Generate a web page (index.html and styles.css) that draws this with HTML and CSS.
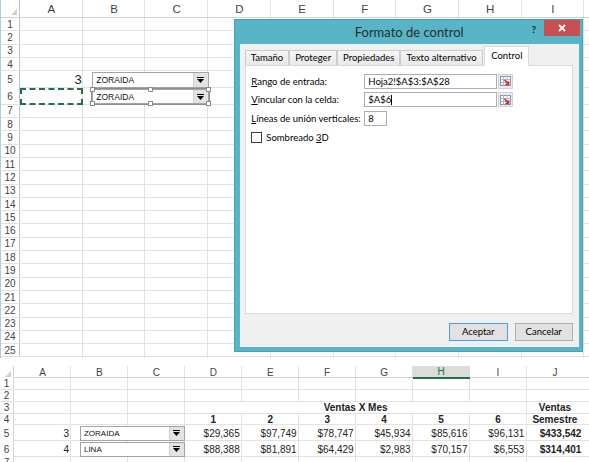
FILE: index.html
```html
<!DOCTYPE html>
<html lang="es">
<head>
    <meta charset="UTF-8">
    <title>Formato de control</title>
    <link rel="stylesheet" href="styles.css">
</head>
<body>

<!-- hoja de arriba: combos vinculados -->
<div class="sheet sheet-top">
    <div class="row head">
        <div class="rh corner"></div>
        <div class="ch">A</div><div class="ch">B</div><div class="ch">C</div><div class="ch">D</div><div class="ch">E</div>
        <div class="ch">F</div><div class="ch">G</div><div class="ch">H</div><div class="ch">I</div>
    </div>
    <div class="row"><div class="rh">1</div></div>
    <div class="row"><div class="rh">2</div></div>
    <div class="row"><div class="rh">3</div></div>
    <div class="row"><div class="rh">4</div></div>
    <div class="row tall">
        <div class="rh">5</div>
        <div class="cell num big">3</div>
        <div class="combo">
            <span class="combo-text">ZORAIDA</span>
            <span class="combo-btn"><svg class="arrow" viewBox="0 0 7 6"><rect width="7" height="1"/><polygon points="0,2 7,2 3.5,6"/></svg></span>
        </div>
    </div>
    <div class="row tall">
        <div class="rh">6</div>
        <div class="cell marquee"></div>
        <div class="combo selected">
            <span class="combo-text">ZORAIDA</span>
            <span class="combo-btn"><svg class="arrow" viewBox="0 0 7 6"><rect width="7" height="1"/><polygon points="0,2 7,2 3.5,6"/></svg></span>
            <i class="handle tl"></i><i class="handle tm"></i><i class="handle tr"></i>
            <i class="handle bl"></i><i class="handle bm"></i><i class="handle br"></i>
        </div>
    </div>
    <div class="row"><div class="rh">7</div></div>
    <div class="row"><div class="rh">8</div></div>
    <div class="row"><div class="rh">9</div></div>
    <div class="row"><div class="rh">10</div></div>
    <div class="row"><div class="rh">11</div></div>
    <div class="row"><div class="rh">12</div></div>
    <div class="row"><div class="rh">13</div></div>
    <div class="row"><div class="rh">14</div></div>
    <div class="row"><div class="rh">15</div></div>
    <div class="row"><div class="rh">16</div></div>
    <div class="row"><div class="rh">17</div></div>
    <div class="row"><div class="rh">18</div></div>
    <div class="row"><div class="rh">19</div></div>
    <div class="row"><div class="rh">20</div></div>
    <div class="row"><div class="rh">21</div></div>
    <div class="row"><div class="rh">22</div></div>
    <div class="row"><div class="rh">23</div></div>
    <div class="row"><div class="rh">24</div></div>
    <div class="row"><div class="rh">25</div></div>
</div>

<!-- hoja de abajo: ventas por mes -->
<div class="sheet sheet-bottom">
    <div class="row head">
        <div class="rh corner"></div>
        <div class="ch">A</div><div class="ch">B</div><div class="ch">C</div><div class="ch">D</div><div class="ch">E</div>
        <div class="ch">F</div><div class="ch">G</div><div class="ch active">H</div><div class="ch">I</div><div class="ch">J</div>
    </div>
    <div class="row"><div class="rh">1</div></div>
    <div class="row"><div class="rh">2</div></div>
    <div class="row">
        <div class="rh">3</div>
        <div class="cell b center merged">Ventas X Mes</div>
        <div class="cell b center">Ventas</div>
    </div>
    <div class="row">
        <div class="rh">4</div>
        <div class="cell b center col-d">1</div>
        <div class="cell b center">2</div>
        <div class="cell b center">3</div>
        <div class="cell b center">4</div>
        <div class="cell b center">5</div>
        <div class="cell b center">6</div>
        <div class="cell b center">Semestre</div>
    </div>
    <div class="row tall">
        <div class="rh">5</div>
        <div class="cell num">3</div>
        <div class="combo">
            <span class="combo-text">ZORAIDA</span>
            <span class="combo-btn"><svg class="arrow" viewBox="0 0 7 6"><rect width="7" height="1"/><polygon points="0,2 7,2 3.5,6"/></svg></span>
        </div>
        <div class="cell num">$29,365</div>
        <div class="cell num">$97,749</div>
        <div class="cell num">$78,747</div>
        <div class="cell num">$45,934</div>
        <div class="cell num">$85,616</div>
        <div class="cell num">$96,131</div>
        <div class="cell num b">$433,542</div>
    </div>
    <div class="row tall">
        <div class="rh">6</div>
        <div class="cell num">4</div>
        <div class="combo">
            <span class="combo-text">LINA</span>
            <span class="combo-btn"><svg class="arrow" viewBox="0 0 7 6"><rect width="7" height="1"/><polygon points="0,2 7,2 3.5,6"/></svg></span>
        </div>
        <div class="cell num">$88,388</div>
        <div class="cell num">$81,891</div>
        <div class="cell num">$64,429</div>
        <div class="cell num">$2,983</div>
        <div class="cell num">$70,157</div>
        <div class="cell num">$6,553</div>
        <div class="cell num b">$314,401</div>
    </div>
    <div class="row"><div class="rh">7</div></div>
</div>

<!-- cuadro de dialogo encima de la hoja -->
<div class="dialog">
    <div class="titlebar">
        <span class="title">Formato de control</span>
        <span class="help">?</span>
        <span class="close"><svg width="8" height="8" viewBox="0 0 8 8"><path d="M1 1L7 7M7 1L1 7" stroke="#fff" stroke-width="1.8"/></svg></span>
    </div>
    <div class="dlg-body">
        <div class="tabs">
            <div class="tab">Tamaño</div>
            <div class="tab">Proteger</div>
            <div class="tab">Propiedades</div>
            <div class="tab">Texto alternativo</div>
            <div class="tab active">Control</div>
        </div>
        <div class="panel">
            <div class="fields">
                <span><u>R</u>ango de entrada:</span>
                <div class="refedit">
                    <span class="input">Hoja2!$A$3:$A$28</span>
                    <span class="refbtn"><svg width="11" height="10" viewBox="0 0 11 10"><rect x="0.5" y="0.5" width="10" height="9" fill="#fff" stroke="#7d97b4"/><path d="M0.5 3.5h10M0.5 6.5h10M3.5 0.5v9M7 0.5v9" stroke="#a9bdd2"/><path d="M4.5 4L8.5 8M8.5 5.2V8.5H5.2" stroke="#d62a2a" stroke-width="1.6" fill="none"/></svg></span>
                </div>
                <span><u>V</u>incular con la celda:</span>
                <div class="refedit">
                    <span class="input">$A$6<span class="caret"></span></span>
                    <span class="refbtn"><svg width="11" height="10" viewBox="0 0 11 10"><rect x="0.5" y="0.5" width="10" height="9" fill="#fff" stroke="#7d97b4"/><path d="M0.5 3.5h10M0.5 6.5h10M3.5 0.5v9M7 0.5v9" stroke="#a9bdd2"/><path d="M4.5 4L8.5 8M8.5 5.2V8.5H5.2" stroke="#d62a2a" stroke-width="1.6" fill="none"/></svg></span>
                </div>
                <span><u>L</u>íneas de unión verticales:</span>
                <span class="input short">8</span>
            </div>
            <div class="check"><span class="box"></span><span>Sombreado <u>3</u>D</span></div>
        </div>
        <div class="buttons">
            <button class="btn default">Aceptar</button>
            <button class="btn">Cancelar</button>
        </div>
    </div>
</div>

</body>
</html>
```

FILE: styles.css
```css
body {
    margin: 0;
    width: 589px;
    height: 462px;
    overflow: hidden;
    position: relative;
    background: #ffffff;
    font-family: "Liberation Sans", Arial, sans-serif;
    color: #222;
}

/* ---- hojas ---- */
.sheet {
    overflow: hidden;
}
.row {
    display: grid;
    box-sizing: border-box;
    border-bottom: 1px solid #e2e2e2;
}
.rh {
    box-sizing: border-box;
    background: #fff;
    border-right: 1px solid #c3c3c3;
    color: #444;
    display: flex;
    align-items: center;
    justify-content: center;
}
.ch {
    color: #444;
    display: flex;
    align-items: center;
    justify-content: center;
}
.corner {
    align-items: flex-end;
    justify-content: flex-end;
    padding: 0 2px 2px 0;
}
.corner::after {
    content: "";
    border-left: 6px solid transparent;
    border-bottom: 6px solid #cfcfcf;
}
.cell {
    display: flex;
    align-items: center;
    min-width: 0;
    white-space: nowrap;
}
.num {
    justify-content: flex-end;
    padding-right: 2px;
}
.center {
    justify-content: center;
}
.b {
    font-weight: bold;
}

.sheet-top {
    height: 358px;
    border-left: 1px solid #a9cfe0;
    background-image: repeating-linear-gradient(to right, transparent 0 61.7px, #e2e2e2 61.7px 62.7px);
    background-position: 19px 0;
}
.sheet-top .row {
    grid-template-columns: 19px repeat(10, 62.7px);
    height: 13.3px;
}
.sheet-top .row.head {
    height: 18px;
    border-bottom-color: #d2d2d2;
}
.sheet-top .row.tall {
    height: 16.8px;
}
.sheet-top .rh {
    font-size: 10px;
}
.sheet-top .ch {
    font-size: 11.5px;
}
.big {
    font-size: 13px;
    align-items: flex-end;
    padding: 0 1px 1px 0;
}
.marquee {
    box-sizing: border-box;
    border: 2px dashed #217346;
    margin-bottom: -1px;
}

.sheet-bottom {
    margin-top: 8px;
    font-size: 10px;
    background-image: repeating-linear-gradient(to right, transparent 0 55.95px, #e2e2e2 55.95px 56.95px);
    background-position: 14px 0;
}
.sheet-bottom .row {
    grid-template-columns: 14px repeat(10, 56.95px);
    height: 11.85px;
}
.sheet-bottom .row.head {
    height: 12px;
    border-bottom-color: #d2d2d2;
}
.sheet-bottom .row.tall {
    height: 16px;
}
.sheet-bottom .rh {
    border-right-color: #d6d6d6;
}
.ch.active {
    background: #dcdcdc;
    border-bottom: 2px solid #217346;
    color: #217346;
}
.merged {
    grid-column: 5 / 11;
    background: #fff;
}
.col-d {
    grid-column-start: 5;
}

/* ---- cuadros combinados ---- */
.combo {
    grid-column: span 2;
    position: relative;
    display: flex;
    box-sizing: border-box;
    height: 15.7px;
    margin: 0.8px -0.7px 0 9.6px;
    align-self: start;
    border: 1px solid #a3a3a3;
    background: #fff;
}
.sheet-bottom .combo {
    height: 15px;
    margin: 0.5px 0 0 9px;
}
.combo-text {
    flex: 1;
    display: flex;
    align-items: center;
    padding-left: 3px;
    font-size: 8.5px;
    color: #111;
}
.sheet-bottom .combo-text {
    font-size: 8px;
}
.combo-btn {
    width: 14px;
    background: #e3e3e3;
    border-left: 1px solid #d0d0d0;
    display: flex;
    align-items: center;
    justify-content: center;
}
.arrow {
    width: 7px;
    height: 6px;
}
.combo.selected {
    outline: 1px solid #8c8c8c;
}
.handle {
    position: absolute;
    width: 5px;
    height: 5px;
    box-sizing: border-box;
    background: #fff;
    border: 1px solid #8a8a8a;
}
.tl { top: -3px; left: -3px; }
.tm { top: -3px; left: calc(50% - 2.5px); }
.tr { top: -3px; right: -3px; }
.bl { bottom: -3px; left: -3px; }
.bm { bottom: -3px; left: calc(50% - 2.5px); }
.br { bottom: -3px; right: -3px; }

/* ---- dialogo ---- */
.dialog {
    position: absolute;
    left: 234px;
    top: 19px;
    width: 349px;
    height: 333px;
    box-sizing: border-box;
    display: flex;
    flex-direction: column;
    background: #58b5c7;
    border: 1px solid #45a2b5;
    font-family: Lato, "Liberation Sans", sans-serif;
    font-size: 9.5px;
    color: #000;
}
.titlebar {
    height: 24px;
    display: flex;
    align-items: flex-start;
}
.title {
    flex: 1;
    text-align: center;
    padding-left: 52px;
    font-size: 13px;
    line-height: 24px;
    color: #2b2b2b;
}
.help {
    font-weight: bold;
    font-size: 10px;
    margin: 3px 8px 0 0;
    color: #222;
}
.close {
    width: 36px;
    height: 16px;
    margin-right: 2px;
    background: #c75050;
    display: flex;
    align-items: center;
    justify-content: center;
}
.dlg-body {
    flex: 1;
    margin: 0 3px 4px 5px;
    padding: 1.7px 6.3px 6.3px 4.7px;
    background: #f0f0f0;
    display: flex;
    flex-direction: column;
}
.tabs {
    display: flex;
    align-items: flex-end;
    height: 19.3px;
    position: relative;
    z-index: 1;
}
.tab {
    height: 15px;
    box-sizing: border-box;
    padding: 0 5px;
    line-height: 14px;
    border: 1px solid #cbcbcb;
    border-bottom: none;
    background: linear-gradient(#f5f5f5, #e9e9e9);
}
.tab.active {
    height: 20.3px;
    margin: 0 0 -1px 1.6px;
    padding: 0 6px;
    line-height: 18px;
    background: #fff;
    border-color: #d9d9d9;
}
.panel {
    flex: 1;
    border: 1px solid #d9d9d9;
    background: #fff;
    padding: 8px 0 0 5.6px;
}
.fields {
    display: grid;
    grid-template-columns: 113px auto;
    justify-content: start;
    align-items: center;
    row-gap: 3.5px;
}
.refedit {
    display: flex;
}
.input {
    height: 15px;
    box-sizing: border-box;
    border: 1px solid #abadb3;
    background: #fff;
    padding: 0 3px;
    line-height: 13px;
    white-space: nowrap;
}
.refedit .input {
    width: 133px;
}
.input.short {
    width: 23px;
}
.caret {
    display: inline-block;
    width: 1px;
    height: 10px;
    background: #000;
    vertical-align: -2px;
}
.refbtn {
    width: 15px;
    height: 15px;
    box-sizing: border-box;
    margin-left: 0.7px;
    border: 1px solid #d3d3d3;
    background: #ececec;
    display: flex;
    align-items: center;
    justify-content: center;
}
.check {
    display: flex;
    align-items: center;
    gap: 4px;
    margin-top: 6px;
}
.box {
    width: 11px;
    height: 11px;
    box-sizing: border-box;
    border: 1px solid #3a3a3a;
    background: #fff;
}
.buttons {
    display: flex;
    justify-content: flex-end;
    gap: 7px;
    margin-top: 8.7px;
}
.btn {
    width: 58px;
    height: 18px;
    box-sizing: border-box;
    padding: 0;
    border: 1px solid #adadad;
    background: #e1e1e1;
    font: inherit;
    color: #000;
}
.btn.default {
    width: 59px;
    border-color: #4a9de0;
}
```
